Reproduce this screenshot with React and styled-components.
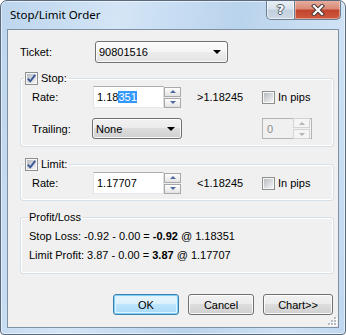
import React from "react"
import styled, { createGlobalStyle, css } from "styled-components"

const GlobalStyle = createGlobalStyle`
  html, body {
    margin: 0;
    padding: 0;
    background: #ffffff;
  }
  body {
    width: 346px;
    height: 335px;
    overflow: hidden;
    font-family: "Liberation Sans", Arial, sans-serif;
    font-size: 11px;
    color: #000;
  }
`

const Window = styled.div`
  width: 346px;
  height: 335px;
  box-sizing: border-box;
  border: 1px solid #5a6a7c;
  border-radius: 7px 7px 4px 4px;
  background: linear-gradient(100deg, #bcd5ee 0%, #d4e5f6 30%, #c6dcf2 45%, #b9d3ec 60%, #cfe2f5 85%, #bfd7ef 100%);
  box-shadow: inset 0 0 0 1px rgba(255, 255, 255, 0.55);
  padding: 0 6px 6px 6px;
  display: flex;
  flex-direction: column;
  overflow: hidden;
`

const TitleBar = styled.div`
  height: 28px;
  display: flex;
  justify-content: space-between;
  align-items: flex-start;
`

const Title = styled.div`
  font-family: "Noto Sans", "Open Sans", sans-serif;
  font-size: 11.5px;
  line-height: 28px;
  padding-left: 3px;
  color: #000;
`

const Caption = styled.div`
  display: flex;
  margin-top: -1px;
  margin-right: -2px;
`

const CapBtn = styled.div`
  height: 20px;
  box-sizing: border-box;
  border: 1px solid #6b7f94;
  border-top: none;
  display: flex;
  align-items: center;
  justify-content: center;
  ${p =>
    p.close
      ? css`
          width: 46px;
          border-radius: 0 0 5px 0;
          border-left: none;
          background: linear-gradient(#eab1a4 0%, #d98b77 45%, #c2442c 55%, #cc5b41 100%);
          box-shadow: inset 0 0 0 1px rgba(255, 220, 210, 0.5);
        `
      : css`
          width: 29px;
          border-radius: 0 0 0 5px;
          background: linear-gradient(#eaf0f6 0%, #d9e3ed 45%, #c3d0dd 55%, #cdd9e5 100%);
          box-shadow: inset 0 0 0 1px rgba(255, 255, 255, 0.6);
        `}
`

const HelpGlyph = styled.span`
  font-family: "DejaVu Sans", sans-serif;
  font-weight: bold;
  font-size: 13px;
  line-height: 1;
  color: #ffffff;
  text-shadow: -1px 0 #4a5866, 1px 0 #4a5866, 0 -1px #4a5866, 0 1px #4a5866;
`

const Client = styled.div`
  flex: 1;
  position: relative;
  border: 1px solid #7e91a4;
  background: #f0f0f0;
  display: flex;
  flex-direction: column;
  padding: 11px 4px 0 12px;
`

const Row = styled.div`
  display: flex;
  align-items: center;
  height: ${p => p.h || 22}px;
  margin-top: ${p => p.mt || 0}px;
`

const Label = styled.div`
  width: ${p => p.w}px;
  flex-shrink: 0;
  white-space: nowrap;
`

const Combo = styled.div`
  width: ${p => p.w}px;
  height: ${p => p.h}px;
  box-sizing: border-box;
  border: 1px solid #707070;
  border-radius: 3px;
  display: flex;
  align-items: center;
  justify-content: space-between;
  padding: 0 6px 0 3px;
  background: ${p =>
    p.light
      ? "linear-gradient(#fbfbfb 0%, #f5f5f5 50%, #ececec 50%, #e4e4e4 100%)"
      : "linear-gradient(#f2f2f2 0%, #ebebeb 50%, #dddddd 50%, #cfcfcf 100%)"};
  box-shadow: inset 0 0 0 1px rgba(255, 255, 255, 0.8);
`

const Arrow = styled.span`
  width: 0;
  height: 0;
  border-left: 4px solid transparent;
  border-right: 4px solid transparent;
  border-top: 4px solid #000;
`

const Group = styled.fieldset`
  margin: ${p => p.mt}px 0 0 0;
  padding: ${p => p.pad};
  border: 1px solid #d5dfe5;
  border-radius: 3px;
  box-shadow: inset 0 0 0 1px #ffffff;
  min-width: 0;
`

const Legend = styled.legend`
  margin-left: ${p => p.ml}px;
  padding: 0 2px 0 1px;
  height: 13px;
  line-height: 13px;
  display: flex;
  align-items: center;
  gap: 3px;
`

const Edit = styled.div`
  width: 71px;
  height: 22px;
  box-sizing: border-box;
  border: 1px solid #abadb3;
  border-left-color: #e2e3ea;
  border-right-color: #dbdfe6;
  border-bottom-color: #e3e9ef;
  background: #ffffff;
  display: flex;
  align-items: center;
  padding-left: 3px;
`

const Selected = styled.span`
  background: #3399ff;
  color: #ffffff;
`

const SpinCol = styled.div`
  width: 17px;
  height: 21px;
  display: flex;
  flex-direction: column;
  justify-content: space-between;
`

const SpinBtn = styled.div`
  height: 10px;
  box-sizing: border-box;
  border: 1px solid ${p => (p.disabled ? "#d4d4d4" : "#a9a9a9")};
  background: ${p =>
    p.disabled ? "#f4f4f4" : "linear-gradient(#fdfdfd 0%, #eeeeee 60%, #e2e2e2 100%)"};
  display: flex;
  align-items: center;
  justify-content: center;
`

const Tri = styled.span`
  width: 0;
  height: 0;
  border-left: 3px solid transparent;
  border-right: 3px solid transparent;
  ${p =>
    p.up
      ? css`border-bottom: 3px solid ${p.disabled ? "#b5b5b5" : "#4e6a9c"};`
      : css`border-top: 3px solid ${p.disabled ? "#b5b5b5" : "#4e6a9c"};`}
`

const Value = styled.div`
  width: 65px;
  margin-left: 16px;
  flex-shrink: 0;
`

const CheckLabel = styled.div`
  display: flex;
  align-items: center;
  gap: 3px;
`

const DisabledSpin = styled.div`
  width: 50px;
  height: 21px;
  box-sizing: border-box;
  margin-left: ${p => p.ml}px;
  border: 1px solid #b5b5b5;
  background: #f0f0f0;
  display: flex;
  align-items: center;
  justify-content: space-between;
  padding: 1px 1px 1px 4px;
  color: #8b8b8b;
`

const Line = styled.div`
  height: 19px;
  line-height: 19px;
  white-space: nowrap;
`

const Buttons = styled.div`
  display: flex;
  justify-content: flex-end;
  gap: 9px;
  margin-top: 20px;
  padding-right: 1px;
`

const Button = styled.div`
  width: ${p => p.w}px;
  height: 21px;
  box-sizing: border-box;
  border-radius: 3px;
  display: flex;
  align-items: center;
  justify-content: center;
  ${p =>
    p.primary
      ? css`
          border: 1px solid #3c7fb1;
          background: linear-gradient(#eaf6fd 0%, #d9f0fc 50%, #bee6fd 50%, #a7d9f5 100%);
          box-shadow: inset 0 0 0 1px #7ed0f4, inset 0 0 0 2px #dff3fd;
        `
      : css`
          border: 1px solid #707070;
          background: linear-gradient(#f2f2f2 0%, #ebebeb 50%, #dddddd 50%, #cfcfcf 100%);
          box-shadow: inset 0 0 0 1px rgba(255, 255, 255, 0.8);
        `}
`

const Grip = styled.svg`
  position: absolute;
  right: 1px;
  bottom: 1px;
`

function Checkbox({ checked }) {
  return (
    <svg width="13" height="13" viewBox="0 0 13 13">
      <defs>
        <linearGradient id={checked ? "cbg1" : "cbg0"} x1="0" y1="0" x2="1" y2="1">
          <stop offset="0" stopColor="#b8bcc1" />
          <stop offset="1" stopColor="#f4f4f4" />
        </linearGradient>
      </defs>
      <rect x="0.5" y="0.5" width="12" height="12" fill="#f6f6f6" stroke="#8e8f8f" />
      <rect x="2" y="2" width="9" height="9" fill={`url(#${checked ? "cbg1" : "cbg0"})`} />
      {checked && (
        <path d="M2.8 6.6 L5.3 9.3 L10.2 2.8" fill="none" stroke="#3b5a99" strokeWidth="2" />
      )}
    </svg>
  )
}

function Spinner({ disabled }) {
  return (
    <SpinCol>
      <SpinBtn disabled={disabled}>
        <Tri up disabled={disabled} />
      </SpinBtn>
      <SpinBtn disabled={disabled}>
        <Tri disabled={disabled} />
      </SpinBtn>
    </SpinCol>
  )
}

function RateRow({ value, selected, bound }) {
  return (
    <Row>
      <Label w={61}>Rate:</Label>
      <Edit>
        {value}
        {selected && <Selected>{selected}</Selected>}
      </Edit>
      <Spinner />
      <Value>{bound}</Value>
      <CheckLabel>
        <Checkbox />
        In pips
      </CheckLabel>
    </Row>
  )
}

export default function App() {
  return (
    <>
      <GlobalStyle />
      <Window>
        <TitleBar>
          <Title>Stop/Limit Order</Title>
          <Caption>
            <CapBtn>
              <HelpGlyph>?</HelpGlyph>
            </CapBtn>
            <CapBtn close>
              <svg width="14" height="12" viewBox="0 0 14 12">
                <path d="M3 2 L11 10 M11 2 L3 10" stroke="#4a3a36" strokeWidth="4.2" strokeLinecap="square" />
                <path d="M3 2 L11 10 M11 2 L3 10" stroke="#ffffff" strokeWidth="2.2" strokeLinecap="square" />
              </svg>
            </CapBtn>
          </Caption>
        </TitleBar>
        <Client>
          <Row>
            <Label w={75}>Ticket:</Label>
            <Combo w={133} h={22} light>
              90801516
              <Arrow />
            </Combo>
          </Row>

          <Group mt={9} pad="1px 0 7px 11px">
            <Legend ml={-8}>
              <Checkbox checked />
              Stop:
            </Legend>
            <RateRow value="1.18" selected="351" bound=">1.18245" />
            <Row mt={10} h={21}>
              <Label w={60}>Trailing:</Label>
              <Combo w={90} h={21}>
                None
                <Arrow />
              </Combo>
              <DisabledSpin ml={80}>
                0
                <Spinner disabled />
              </DisabledSpin>
            </Row>
          </Group>

          <Group mt={11} pad="1px 0 6px 11px">
            <Legend ml={-8}>
              <Checkbox checked />
              Limit:
            </Legend>
            <RateRow value="1.17707" bound="<1.18245" />
          </Group>

          <Group mt={10} pad="3px 0 8px 8px">
            <Legend ml={-1}>Profit/Loss</Legend>
            <Line>
              Stop Loss: -0.92 - 0.00 = <b>-0.92</b> @ 1.18351
            </Line>
            <Line>
              Limit Profit: 3.87 - 0.00 = <b>3.87</b> @ 1.17707
            </Line>
          </Group>

          <Buttons>
            <Button primary w={66}>
              OK
            </Button>
            <Button w={66}>Cancel</Button>
            <Button w={70}>Chart&gt;&gt;</Button>
          </Buttons>

          <Grip width="11" height="11" viewBox="0 0 11 11">
            {[
              [8, 2],
              [5, 5],
              [8, 5],
              [2, 8],
              [5, 8],
              [8, 8],
            ].map(([x, y]) => (
              <g key={`${x}-${y}`}>
                <rect x={x + 1} y={y + 1} width="2" height="2" fill="#ffffff" />
                <rect x={x} y={y} width="2" height="2" fill="#b8bcc2" />
              </g>
            ))}
          </Grip>
        </Client>
      </Window>
    </>
  )
}
